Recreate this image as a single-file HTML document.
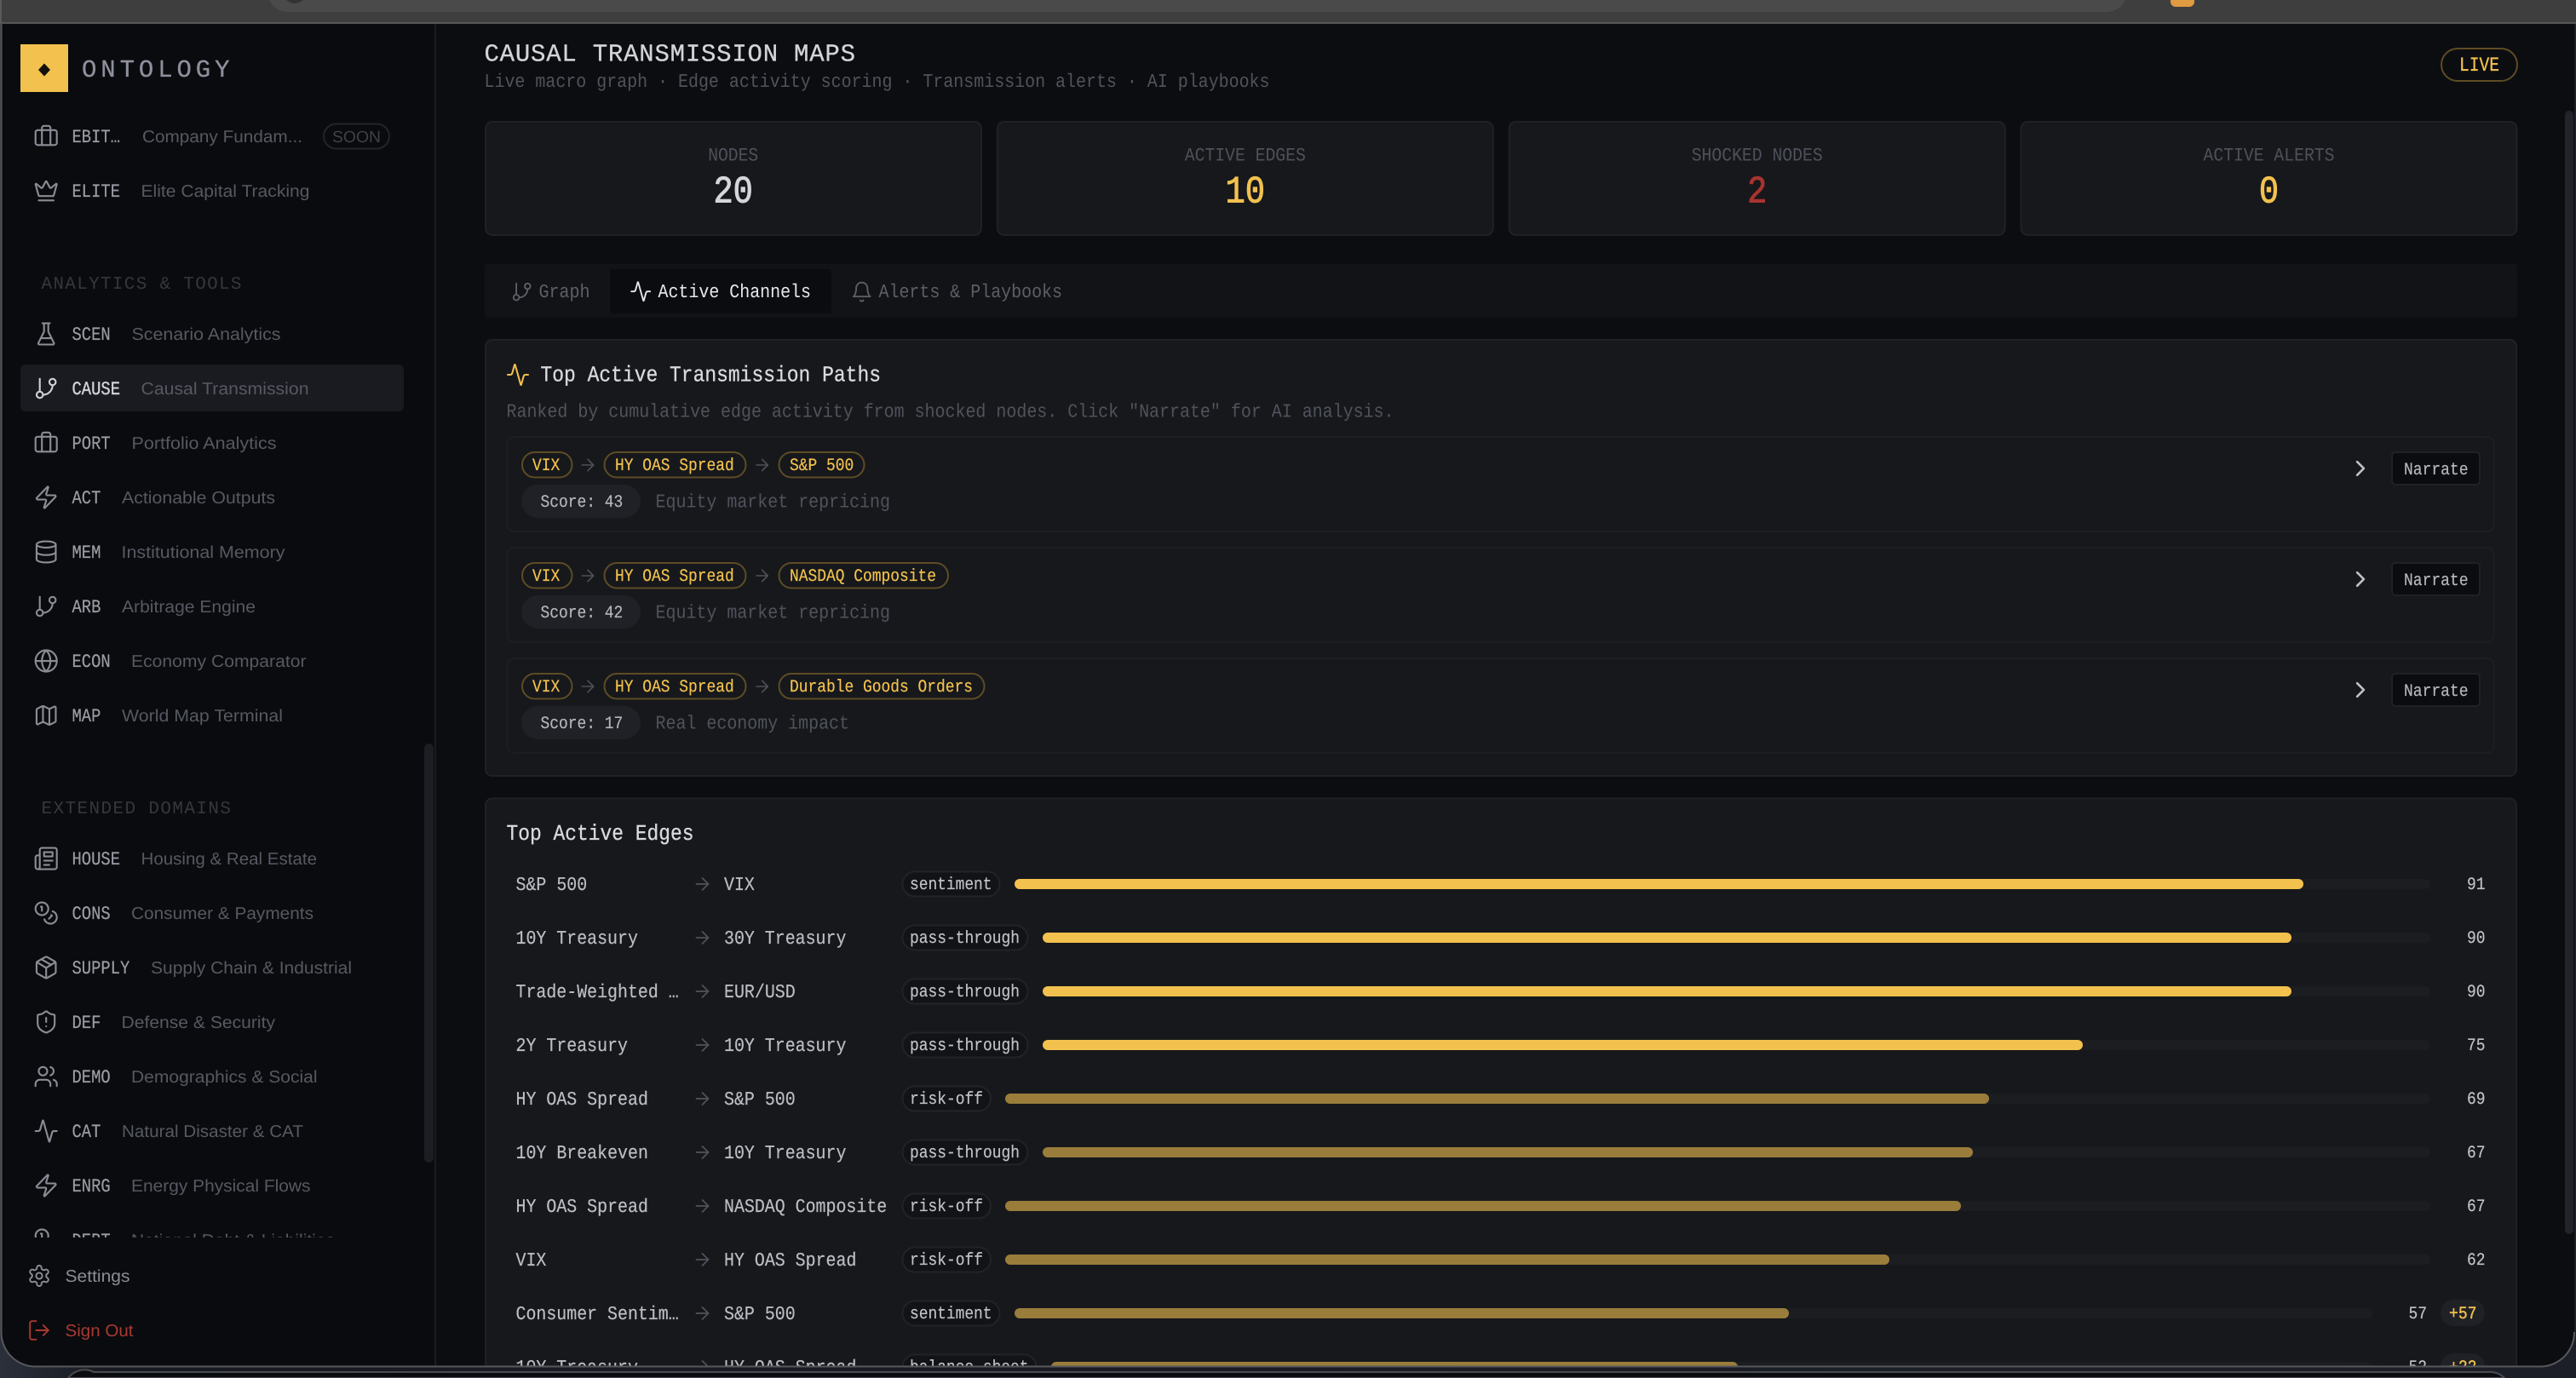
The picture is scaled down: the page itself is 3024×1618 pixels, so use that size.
<!DOCTYPE html>
<html><head><meta charset="utf-8"><title>Causal Transmission Maps</title>
<style>
html,body{margin:0;padding:0;width:3024px;height:1618px;overflow:hidden;background:#16181d}
svg{display:block}
text{white-space:pre;text-rendering:geometricPrecision}
.m{font-family:"Liberation Mono",monospace}
.s{font-family:"Liberation Sans",sans-serif}
.ic{fill:none;stroke-linecap:round;stroke-linejoin:round}
.code{font-size:22px;fill:#9a9da5;stroke:#9a9da5;stroke-width:.2}
.sub{font-size:20px;fill:#565962}
.sb{font-size:22.5px;fill:#50535b}
.lbl{font-size:22px;fill:#4e5159;text-anchor:middle}
.val{font-size:45px;font-weight:400;text-anchor:middle;stroke-width:1}
.chip{fill:none;stroke:#5e4c24;stroke-width:2}
.ct{font-size:20.5px;fill:#f2c14e;stroke:#f2c14e;stroke-width:.2}
.sc{font-size:20.5px;fill:#b4b6bc;stroke:#b4b6bc;stroke-width:.2}
.nar{font-size:20.5px;fill:#b4b6bc;stroke:#b4b6bc;stroke-width:.2}
.e{font-size:22.5px;fill:#bcbec4;stroke:#bcbec4;stroke-width:.2}
.t{font-size:20.5px;fill:#c0c2c7;stroke:#c0c2c7;stroke-width:.2}
.n{font-size:20.5px;fill:#c0c2c7;stroke:#c0c2c7;stroke-width:.2}
.tag{fill:#121317;stroke:#212329;stroke-width:2}
.tr{fill:#1b1d21}
.hi{fill:#f2c14e}
.lo{fill:#9a7d3b}
</style></head>
<body>
<svg xmlns="http://www.w3.org/2000/svg" width="3024" height="1618" viewBox="0 0 3024 1618">
<defs>
<linearGradient id="out" x1="0" x2="1" y1="0" y2="0"><stop offset="0" stop-color="#2b303b"/><stop offset=".04" stop-color="#171a20"/><stop offset="1" stop-color="#1c1f27"/></linearGradient>
<clipPath id="win"><path d="M2 28H3022V1564a40 40 0 0 1-40 40H42a40 40 0 0 1-40-40Z"/></clipPath>
<clipPath id="nav"><rect x="2" y="120" width="496" height="1333"/></clipPath>
<g id="i-brief"><path d="M16 21V5a2 2 0 0 0-2-2h-4a2 2 0 0 0-2 2v16"/><rect x="2" y="7" width="20" height="14" rx="2"/></g>
<g id="i-crown"><path d="M11.562 3.266a.5.5 0 0 1 .876 0L15.39 8.87a1 1 0 0 0 1.516.294L21.183 5.5a.5.5 0 0 1 .798.519l-2.834 10.246a1 1 0 0 1-.956.734H5.81a1 1 0 0 1-.957-.734L2.02 6.02a.5.5 0 0 1 .798-.519l4.276 3.664a1 1 0 0 0 1.516-.294z"/><path d="M5 21h14"/></g>
<g id="i-flask"><path d="M10 2v7.527a2 2 0 0 1-.211.896L4.72 20.55a1 1 0 0 0 .9 1.45h12.76a1 1 0 0 0 .9-1.45l-5.069-10.127A2 2 0 0 1 14 9.527V2"/><path d="M8.5 2h7"/><path d="M7 16h10"/></g>
<g id="i-branch"><path d="M6 3v12"/><circle cx="18" cy="6" r="3"/><circle cx="6" cy="18" r="3"/><path d="M18 9a9 9 0 0 1-9 9"/></g>
<g id="i-zap"><path d="M4 14a1 1 0 0 1-.78-1.63l9.9-10.2a.5.5 0 0 1 .86.46l-1.92 6.02A1 1 0 0 0 13 10h7a1 1 0 0 1 .78 1.63l-9.9 10.2a.5.5 0 0 1-.86-.46l1.92-6.02A1 1 0 0 0 11 14z"/></g>
<g id="i-db"><ellipse cx="12" cy="5" rx="9" ry="3"/><path d="M3 5V19A9 3 0 0 0 21 19V5"/><path d="M3 12A9 3 0 0 0 21 12"/></g>
<g id="i-globe"><circle cx="12" cy="12" r="10"/><path d="M12 2a14.5 14.5 0 0 0 0 20 14.5 14.5 0 0 0 0-20"/><path d="M2 12h20"/></g>
<g id="i-map"><path d="M14.106 5.553a2 2 0 0 0 1.788 0l3.659-1.83A1 1 0 0 1 21 4.619v12.764a1 1 0 0 1-.553.894l-4.553 2.277a2 2 0 0 1-1.788 0l-4.212-2.106a2 2 0 0 0-1.788 0l-3.659 1.83A1 1 0 0 1 3 19.381V6.618a1 1 0 0 1 .553-.894l4.553-2.277a2 2 0 0 1 1.788 0z"/><path d="M15 5.764v15"/><path d="M9 3.236v15"/></g>
<g id="i-news"><path d="M4 22h16a2 2 0 0 0 2-2V4a2 2 0 0 0-2-2H8a2 2 0 0 0-2 2v16a2 2 0 0 1-2 2Zm0 0a2 2 0 0 1-2-2v-9c0-1.1.9-2 2-2h2"/><path d="M18 14h-8"/><path d="M15 18h-5"/><path d="M10 6h8v4h-8V6Z"/></g>
<g id="i-coins"><circle cx="8" cy="8" r="6"/><path d="M18.09 10.37A6 6 0 1 1 10.34 18"/><path d="M7 6h1v4"/><path d="m16.71 13.88.7.71-2.82 2.82"/></g>
<g id="i-pkg"><path d="M11 21.73a2 2 0 0 0 2 0l7-4A2 2 0 0 0 21 16V8a2 2 0 0 0-1-1.73l-7-4a2 2 0 0 0-2 0l-7 4A2 2 0 0 0 3 8v8a2 2 0 0 0 1 1.73z"/><path d="M12 22V12"/><path d="m3.3 7 7.703 4.734a2 2 0 0 0 1.994 0L20.7 7"/><path d="m7.5 4.27 9 5.15"/></g>
<g id="i-shield"><path d="M20 13c0 5-3.5 7.5-7.66 8.95a1 1 0 0 1-.67-.01C7.5 20.5 4 18 4 13V6a1 1 0 0 1 1-1c2 0 4.5-1.2 6.24-2.72a1.17 1.17 0 0 1 1.52 0C14.51 3.81 17 5 19 5a1 1 0 0 1 1 1z"/><path d="M12 8v4"/><path d="M12 16h.01"/></g>
<g id="i-users"><path d="M16 21v-2a4 4 0 0 0-4-4H6a4 4 0 0 0-4 4v2"/><circle cx="9" cy="7" r="4"/><path d="M22 21v-2a4 4 0 0 0-3-3.87"/><path d="M16 3.13a4 4 0 0 1 0 7.75"/></g>
<g id="i-act"><path d="M22 12h-2.48a2 2 0 0 0-1.93 1.46l-2.35 8.36a.25.25 0 0 1-.48 0L9.24 2.18a.25.25 0 0 0-.48 0l-2.35 8.36A2 2 0 0 1 4.49 12H2"/></g>
<g id="i-gear"><path d="M12.22 2h-.44a2 2 0 0 0-2 2v.18a2 2 0 0 1-1 1.73l-.43.25a2 2 0 0 1-2 0l-.15-.08a2 2 0 0 0-2.73.73l-.22.38a2 2 0 0 0 .73 2.73l.15.1a2 2 0 0 1 1 1.72v.51a2 2 0 0 1-1 1.74l-.15.09a2 2 0 0 0-.73 2.73l.22.38a2 2 0 0 0 2.73.73l.15-.08a2 2 0 0 1 2 0l.43.25a2 2 0 0 1 1 1.73V20a2 2 0 0 0 2 2h.44a2 2 0 0 0 2-2v-.18a2 2 0 0 1 1-1.73l.43-.25a2 2 0 0 1 2 0l.15.08a2 2 0 0 0 2.73-.73l.22-.39a2 2 0 0 0-.73-2.73l-.15-.08a2 2 0 0 1-1-1.74v-.5a2 2 0 0 1 1-1.74l.15-.09a2 2 0 0 0 .73-2.73l-.22-.38a2 2 0 0 0-2.73-.73l-.15.08a2 2 0 0 1-2 0l-.43-.25a2 2 0 0 1-1-1.73V4a2 2 0 0 0-2-2z"/><circle cx="12" cy="12" r="3"/></g>
<g id="i-out"><path d="M9 21H5a2 2 0 0 1-2-2V5a2 2 0 0 1 2-2h4"/><path d="M16 17l5-5-5-5"/><path d="M21 12H9"/></g>
<g id="i-bell"><path d="M6 8a6 6 0 0 1 12 0c0 7 3 9 3 9H3s3-2 3-9"/><path d="M10.3 21a1.94 1.94 0 0 0 3.4 0"/></g>
<g id="i-arrow"><path d="M5 12h14"/><path d="m12 5 7 7-7 7"/></g>
<g id="i-chev"><path d="m9 18 6-6-6-6"/></g>
</defs>

<rect width="3024" height="1618" fill="url(#out)"/>
<path d="M80 1618a24 24 0 0 1 30-7H2920a24 24 0 0 1 20 7Z" fill="#0b0c0f" stroke="#4a4c50" stroke-width="2"/>
<rect x="0" y="0" width="3024" height="28" fill="#3e3e3e"/>
<rect x="0" y="0" width="2" height="28" fill="#5a5a5a"/>
<path d="M314 -10H2497a24 24 0 0 1-24 24H338a24 24 0 0 1-24-24Z" fill="#4a4a4a"/>
<circle cx="346" cy="-10" r="14" fill="#333"/>
<rect x="2548" y="-8" width="28" height="16" rx="6" fill="#e09a42"/>
<rect x="0" y="26" width="3024" height="2" fill="#575757"/>

<g clip-path="url(#win)">
<rect x="2" y="28" width="3020" height="1580" fill="#0c0d11"/>
<rect x="2" y="28" width="508" height="1580" fill="#0a0b0e"/>
<rect x="510" y="28" width="2" height="1580" fill="#1a1c20"/>

<rect x="24" y="52" width="56" height="56" fill="#f2c14e"/>
<path d="M52 74.500l7 7.500-7 7.500-7-7.500z" fill="#12100a"/>
<text class="m" x="96" y="90" font-size="29" fill="#8d909c" stroke="#8d909c" stroke-width=".3" textLength="173.500" lengthAdjust="spacing">ONTOLOGY</text>

<g clip-path="url(#nav)">
<rect x="24" y="428" width="450" height="55" rx="6" fill="#1a1b21"/>
<g class="ic" stroke="#8a8d95" stroke-width="1.7">
<use href="#i-brief" transform="translate(39.200 144) scale(1.25)"/>
<use href="#i-crown" transform="translate(39.200 209) scale(1.25)"/>
<use href="#i-flask" transform="translate(39.200 377) scale(1.25)"/>
<use href="#i-branch" transform="translate(39.200 441) scale(1.25)" stroke="#cfd1d5"/>
<use href="#i-brief" transform="translate(39.200 504) scale(1.25)"/>
<use href="#i-zap" transform="translate(39.200 569) scale(1.25)"/>
<use href="#i-db" transform="translate(39.200 633) scale(1.25)"/>
<use href="#i-branch" transform="translate(39.200 697) scale(1.25)"/>
<use href="#i-globe" transform="translate(39.200 761) scale(1.25)"/>
<use href="#i-map" transform="translate(39.200 825) scale(1.25)"/>
<use href="#i-news" transform="translate(39.200 993) scale(1.25)"/>
<use href="#i-coins" transform="translate(39.200 1057) scale(1.25)"/>
<use href="#i-pkg" transform="translate(39.200 1121) scale(1.25)"/>
<use href="#i-shield" transform="translate(39.200 1185) scale(1.25)"/>
<use href="#i-users" transform="translate(39.200 1249) scale(1.25)"/>
<use href="#i-act" transform="translate(39.200 1313) scale(1.25)"/>
<use href="#i-zap" transform="translate(39.200 1377) scale(1.25)"/>
<use href="#i-coins" transform="translate(39.200 1441) scale(1.25)"/>
</g>
<g class="m code">
<text x="84.500" y="167" textLength="56.500" lengthAdjust="spacingAndGlyphs">EBIT…</text>
<text x="84.500" y="231" textLength="56.500" lengthAdjust="spacingAndGlyphs">ELITE</text>
<text x="84.500" y="399" textLength="45.200" lengthAdjust="spacingAndGlyphs">SCEN</text>
<text x="84.500" y="463" textLength="56.500" lengthAdjust="spacingAndGlyphs" style="fill:#d0d2d6;stroke:#d0d2d6;stroke-width:.4">CAUSE</text>
<text x="84.500" y="527" textLength="45.200" lengthAdjust="spacingAndGlyphs">PORT</text>
<text x="84.500" y="591" textLength="33.900" lengthAdjust="spacingAndGlyphs">ACT</text>
<text x="84.500" y="655" textLength="33.900" lengthAdjust="spacingAndGlyphs">MEM</text>
<text x="84.500" y="719" textLength="33.900" lengthAdjust="spacingAndGlyphs">ARB</text>
<text x="84.500" y="783" textLength="45.200" lengthAdjust="spacingAndGlyphs">ECON</text>
<text x="84.500" y="847" textLength="33.900" lengthAdjust="spacingAndGlyphs">MAP</text>
<text x="84.500" y="1015" textLength="56.500" lengthAdjust="spacingAndGlyphs">HOUSE</text>
<text x="84.500" y="1079" textLength="45.200" lengthAdjust="spacingAndGlyphs">CONS</text>
<text x="84.500" y="1143" textLength="67.800" lengthAdjust="spacingAndGlyphs">SUPPLY</text>
<text x="84.500" y="1207" textLength="33.900" lengthAdjust="spacingAndGlyphs">DEF</text>
<text x="84.500" y="1271" textLength="45.200" lengthAdjust="spacingAndGlyphs">DEMO</text>
<text x="84.500" y="1335" textLength="33.900" lengthAdjust="spacingAndGlyphs">CAT</text>
<text x="84.500" y="1399" textLength="45.200" lengthAdjust="spacingAndGlyphs">ENRG</text>
<text x="84.500" y="1463" textLength="45.200" lengthAdjust="spacingAndGlyphs">DEBT</text>
</g>
<g class="s sub">
<text x="167" y="167" textLength="188" lengthAdjust="spacingAndGlyphs">Company Fundam...</text>
<text x="165.500" y="231" textLength="198" lengthAdjust="spacingAndGlyphs">Elite Capital Tracking</text>
<text x="154.500" y="399" textLength="175" lengthAdjust="spacingAndGlyphs">Scenario Analytics</text>
<text x="165.500" y="463" textLength="197" lengthAdjust="spacingAndGlyphs">Causal Transmission</text>
<text x="154.500" y="527" textLength="170" lengthAdjust="spacingAndGlyphs">Portfolio Analytics</text>
<text x="143" y="591" textLength="180" lengthAdjust="spacingAndGlyphs">Actionable Outputs</text>
<text x="142.500" y="655" textLength="192" lengthAdjust="spacingAndGlyphs">Institutional Memory</text>
<text x="143" y="719" textLength="157" lengthAdjust="spacingAndGlyphs">Arbitrage Engine</text>
<text x="154" y="783" textLength="205.500" lengthAdjust="spacingAndGlyphs">Economy Comparator</text>
<text x="143" y="847" textLength="189" lengthAdjust="spacingAndGlyphs">World Map Terminal</text>
<text x="165.500" y="1015" textLength="206.500" lengthAdjust="spacingAndGlyphs">Housing &amp; Real Estate</text>
<text x="154" y="1079" textLength="214" lengthAdjust="spacingAndGlyphs">Consumer &amp; Payments</text>
<text x="177" y="1143" textLength="236" lengthAdjust="spacingAndGlyphs">Supply Chain &amp; Industrial</text>
<text x="142.500" y="1207" textLength="180.500" lengthAdjust="spacingAndGlyphs">Defense &amp; Security</text>
<text x="154" y="1271" textLength="218.500" lengthAdjust="spacingAndGlyphs">Demographics &amp; Social</text>
<text x="143" y="1335" textLength="213" lengthAdjust="spacingAndGlyphs">Natural Disaster &amp; CAT</text>
<text x="154" y="1399" textLength="210.500" lengthAdjust="spacingAndGlyphs">Energy Physical Flows</text>
<text x="154" y="1463" textLength="239" lengthAdjust="spacingAndGlyphs">National Debt &amp; Liabilities</text>
</g>
<rect x="380" y="145.500" width="77" height="29" rx="14.500" fill="none" stroke="#22242a" stroke-width="2"/>
<text class="s" x="390" y="167" font-size="19" fill="#3f4148" textLength="57" lengthAdjust="spacingAndGlyphs">SOON</text>
<text class="m" x="48.500" y="339" font-size="21" fill="#35373d" textLength="235" lengthAdjust="spacing">ANALYTICS &amp; TOOLS</text>
<text class="m" x="48.500" y="955" font-size="21" fill="#35373d" textLength="222.500" lengthAdjust="spacing">EXTENDED DOMAINS</text>
</g>
<rect x="498" y="873" width="11" height="492" rx="5.500" fill="#1c1e23"/>

<g class="ic" stroke-width="1.6">
<use href="#i-gear" transform="translate(31.600 1483.600) scale(1.2)" stroke="#8a8d95"/>
<use href="#i-out" transform="translate(31.600 1547.600) scale(1.2)" stroke="#a83a32"/>
</g>
<text class="s" x="76.500" y="1505" font-size="20" fill="#8a8d95" textLength="76" lengthAdjust="spacingAndGlyphs">Settings</text>
<text class="s" x="76.500" y="1569" font-size="20" fill="#a83a32" textLength="80" lengthAdjust="spacingAndGlyphs">Sign Out</text>

<text class="m" x="568.500" y="71.500" font-size="29" fill="#d2d4d9" stroke="#d2d4d9" stroke-width=".3" textLength="435.500" lengthAdjust="spacing">CAUSAL TRANSMISSION MAPS</text>
<text class="m sb" x="568.500" y="102" textLength="922" lengthAdjust="spacingAndGlyphs">Live macro graph · Edge activity scoring · Transmission alerts · AI playbooks</text>
<rect x="2866" y="57" width="89" height="38" rx="19" fill="none" stroke="#5e4c24" stroke-width="2"/>
<text class="m" x="2887" y="83" font-size="23.500" fill="#f2c14e" stroke="#f2c14e" stroke-width=".3" textLength="47" lengthAdjust="spacingAndGlyphs">LIVE</text>

<g fill="#16181c" stroke="#1f2126" stroke-width="2">
<rect x="570" y="143" width="582" height="133" rx="8"/>
<rect x="1170.800" y="143" width="582" height="133" rx="8"/>
<rect x="1771.700" y="143" width="582" height="133" rx="8"/>
<rect x="2372.500" y="143" width="582" height="133" rx="8"/>
</g>
<g class="m">
<text class="lbl" x="860.700" y="188.500" textLength="59" lengthAdjust="spacingAndGlyphs">NODES</text>
<text class="val" x="860.700" y="237.500" fill="#d4d6db" stroke="#d4d6db" textLength="46.500" lengthAdjust="spacingAndGlyphs">20</text>
<text class="lbl" x="1461.800" y="188.500" textLength="142" lengthAdjust="spacingAndGlyphs">ACTIVE EDGES</text>
<text class="val" x="1461.800" y="237.500" fill="#f2c14e" stroke="#f2c14e" textLength="46.500" lengthAdjust="spacingAndGlyphs">10</text>
<text class="lbl" x="2062.700" y="188.500" textLength="154" lengthAdjust="spacingAndGlyphs">SHOCKED NODES</text>
<text class="val" x="2062.700" y="237.500" fill="#a8332e" stroke="#a8332e" textLength="23.200" lengthAdjust="spacingAndGlyphs">2</text>
<text class="lbl" x="2663.500" y="188.500" textLength="154" lengthAdjust="spacingAndGlyphs">ACTIVE ALERTS</text>
<text class="val" x="2663.500" y="237.500" fill="#f2c14e" stroke="#f2c14e" textLength="23.200" lengthAdjust="spacingAndGlyphs">0</text>
</g>

<rect x="569" y="310" width="2386" height="63" rx="4" fill="#121317"/>
<rect x="716" y="316" width="260" height="52" rx="3" fill="#0b0c0f"/>
<g class="ic" stroke-width="1.7">
<use href="#i-branch" transform="translate(599.500 329.500) scale(1.1)" stroke="#5c5f67"/>
<use href="#i-act" transform="translate(739 329) scale(1.1)" stroke="#e8e9eb"/>
<use href="#i-bell" transform="translate(998.500 329.500) scale(1.1)" stroke="#5c5f67"/>
</g>
<g class="m" font-size="22.500">
<text x="632.500" y="349" fill="#5c5f67" textLength="60" lengthAdjust="spacingAndGlyphs">Graph</text>
<text x="772.500" y="349" fill="#e8e9eb" textLength="179.500" lengthAdjust="spacingAndGlyphs">Active Channels</text>
<text x="1031.500" y="349" fill="#5c5f67" textLength="215.500" lengthAdjust="spacingAndGlyphs">Alerts &amp; Playbooks</text>
</g>

<rect x="570" y="399" width="2384" height="512" rx="8" fill="#16181c" stroke="#1f2126" stroke-width="2"/>
<use href="#i-act" class="ic" transform="translate(593.600 425.600) scale(1.2)" stroke="#f2c14e" stroke-width="1.7"/>
<text class="m" x="634.500" y="447.500" font-size="26" fill="#d8dade" stroke="#d8dade" stroke-width=".3" textLength="399.500" lengthAdjust="spacingAndGlyphs">Top Active Transmission Paths</text>
<text class="m sb" x="594.500" y="489.500" textLength="1042" lengthAdjust="spacingAndGlyphs">Ranked by cumulative edge activity from shocked nodes. Click "Narrate" for AI analysis.</text>

<g fill="none" stroke="#1c1e23" stroke-width="2">
<rect x="595.500" y="513" width="2332" height="111" rx="8"/>
<rect x="595.500" y="643" width="2332" height="111" rx="8"/>
<rect x="595.500" y="773" width="2332" height="111" rx="8"/>
</g>

<g class="chip">
<rect x="613" y="531" width="58.500" height="29.500" rx="14.700"/><rect x="709.500" y="531" width="166" height="29.500" rx="14.700"/><rect x="914.500" y="531" width="100" height="29.500" rx="14.700"/>
<rect x="613" y="661" width="58.500" height="29.500" rx="14.700"/><rect x="709.500" y="661" width="166" height="29.500" rx="14.700"/><rect x="914.500" y="661" width="198.500" height="29.500" rx="14.700"/>
<rect x="613" y="791" width="58.500" height="29.500" rx="14.700"/><rect x="709.500" y="791" width="166" height="29.500" rx="14.700"/><rect x="914.500" y="791" width="241" height="29.500" rx="14.700"/>
</g>
<g class="ic" stroke="#4e5159" stroke-width="1.7">
<use href="#i-arrow" transform="translate(678.600 534.600) scale(.95)"/><use href="#i-arrow" transform="translate(883.200 534.600) scale(.95)"/>
<use href="#i-arrow" transform="translate(678.600 664.600) scale(.95)"/><use href="#i-arrow" transform="translate(883.200 664.600) scale(.95)"/>
<use href="#i-arrow" transform="translate(678.600 794.600) scale(.95)"/><use href="#i-arrow" transform="translate(883.200 794.600) scale(.95)"/>
</g>
<g class="m ct">
<text x="625" y="552" textLength="32.300" lengthAdjust="spacingAndGlyphs">VIX</text>
<text x="722" y="552" textLength="139.800" lengthAdjust="spacingAndGlyphs">HY OAS Spread</text>
<text x="927" y="552" textLength="75.300" lengthAdjust="spacingAndGlyphs">S&amp;P 500</text>
<text x="625" y="682" textLength="32.300" lengthAdjust="spacingAndGlyphs">VIX</text>
<text x="722" y="682" textLength="139.800" lengthAdjust="spacingAndGlyphs">HY OAS Spread</text>
<text x="927" y="682" textLength="172" lengthAdjust="spacingAndGlyphs">NASDAQ Composite</text>
<text x="625" y="812" textLength="32.300" lengthAdjust="spacingAndGlyphs">VIX</text>
<text x="722" y="812" textLength="139.800" lengthAdjust="spacingAndGlyphs">HY OAS Spread</text>
<text x="927" y="812" textLength="215" lengthAdjust="spacingAndGlyphs">Durable Goods Orders</text>
</g>
<g fill="#1f2126">
<rect x="612" y="569" width="140" height="39" rx="19.500"/><rect x="612" y="699" width="140" height="39" rx="19.500"/><rect x="612" y="829" width="140" height="39" rx="19.500"/>
</g>
<g class="m sc">
<text x="634.500" y="595" textLength="96.800" lengthAdjust="spacingAndGlyphs">Score: 43</text>
<text x="634.500" y="725" textLength="96.800" lengthAdjust="spacingAndGlyphs">Score: 42</text>
<text x="634.500" y="855" textLength="96.800" lengthAdjust="spacingAndGlyphs">Score: 17</text>
</g>
<g class="m sb">
<text x="769.500" y="595.500" textLength="275.500" lengthAdjust="spacingAndGlyphs">Equity market repricing</text>
<text x="769.500" y="725.500" textLength="275.500" lengthAdjust="spacingAndGlyphs">Equity market repricing</text>
<text x="769.500" y="855.500" textLength="227.500" lengthAdjust="spacingAndGlyphs">Real economy impact</text>
</g>

<g class="ic" stroke="#c0c2c7" stroke-width="2">
<use href="#i-chev" transform="translate(2755.400 534.400) scale(1.3)"/>
<use href="#i-chev" transform="translate(2755.400 664.400) scale(1.3)"/>
<use href="#i-chev" transform="translate(2755.400 794.400) scale(1.3)"/>
</g>
<g fill="#0b0c0f" stroke="#1f2126" stroke-width="2">
<rect x="2808" y="531" width="103" height="38" rx="4"/><rect x="2808" y="661" width="103" height="38" rx="4"/><rect x="2808" y="791" width="103" height="38" rx="4"/>
</g>
<g class="m nar">
<text x="2822" y="557" textLength="75.500" lengthAdjust="spacingAndGlyphs">Narrate</text>
<text x="2822" y="687" textLength="75.500" lengthAdjust="spacingAndGlyphs">Narrate</text>
<text x="2822" y="817" textLength="75.500" lengthAdjust="spacingAndGlyphs">Narrate</text>
</g>

<rect x="570" y="937.500" width="2384" height="720" rx="8" fill="#16181c" stroke="#1f2126" stroke-width="2"/>
<text class="m" x="594.500" y="986" font-size="26" fill="#d8dade" stroke="#d8dade" stroke-width=".3" textLength="220" lengthAdjust="spacingAndGlyphs">Top Active Edges</text>

<g class="m e">
<text x="605.500" y="1045" textLength="83.700" lengthAdjust="spacingAndGlyphs">S&amp;P 500</text><text x="850" y="1045" textLength="35.900" lengthAdjust="spacingAndGlyphs">VIX</text>
<text x="605.500" y="1108" textLength="143.400" lengthAdjust="spacingAndGlyphs">10Y Treasury</text><text x="850" y="1108" textLength="143.400" lengthAdjust="spacingAndGlyphs">30Y Treasury</text>
<text x="605.500" y="1171" textLength="191.200" lengthAdjust="spacingAndGlyphs">Trade-Weighted …</text><text x="850" y="1171" textLength="83.700" lengthAdjust="spacingAndGlyphs">EUR/USD</text>
<text x="605.500" y="1234" textLength="131.500" lengthAdjust="spacingAndGlyphs">2Y Treasury</text><text x="850" y="1234" textLength="143.400" lengthAdjust="spacingAndGlyphs">10Y Treasury</text>
<text x="605.500" y="1297" textLength="155.400" lengthAdjust="spacingAndGlyphs">HY OAS Spread</text><text x="850" y="1297" textLength="83.700" lengthAdjust="spacingAndGlyphs">S&amp;P 500</text>
<text x="605.500" y="1360" textLength="155.400" lengthAdjust="spacingAndGlyphs">10Y Breakeven</text><text x="850" y="1360" textLength="143.400" lengthAdjust="spacingAndGlyphs">10Y Treasury</text>
<text x="605.500" y="1423" textLength="155.400" lengthAdjust="spacingAndGlyphs">HY OAS Spread</text><text x="850" y="1423" textLength="191.200" lengthAdjust="spacingAndGlyphs">NASDAQ Composite</text>
<text x="605.500" y="1486" textLength="35.900" lengthAdjust="spacingAndGlyphs">VIX</text><text x="850" y="1486" textLength="155.400" lengthAdjust="spacingAndGlyphs">HY OAS Spread</text>
<text x="605.500" y="1549" textLength="191.200" lengthAdjust="spacingAndGlyphs">Consumer Sentim…</text><text x="850" y="1549" textLength="83.700" lengthAdjust="spacingAndGlyphs">S&amp;P 500</text>
<text x="605.500" y="1612" textLength="143.400" lengthAdjust="spacingAndGlyphs">10Y Treasury</text><text x="850" y="1612" textLength="155.400" lengthAdjust="spacingAndGlyphs">HY OAS Spread</text>
</g>
<g class="ic" stroke="#50535b" stroke-width="1.7">
<use href="#i-arrow" transform="translate(812.500 1026)"/><use href="#i-arrow" transform="translate(812.500 1089)"/><use href="#i-arrow" transform="translate(812.500 1152)"/><use href="#i-arrow" transform="translate(812.500 1215)"/><use href="#i-arrow" transform="translate(812.500 1278)"/><use href="#i-arrow" transform="translate(812.500 1341)"/><use href="#i-arrow" transform="translate(812.500 1404)"/><use href="#i-arrow" transform="translate(812.500 1467)"/><use href="#i-arrow" transform="translate(812.500 1530)"/><use href="#i-arrow" transform="translate(812.500 1593)"/>
</g>
<rect class="tag" x="1059.500" y="1023.500" width="114" height="29" rx="14.500"/>
<rect class="tag" x="1059.500" y="1086.500" width="147" height="29" rx="14.500"/>
<rect class="tag" x="1059.500" y="1149.500" width="147" height="29" rx="14.500"/>
<rect class="tag" x="1059.500" y="1212.500" width="147" height="29" rx="14.500"/>
<rect class="tag" x="1059.500" y="1275.500" width="103.500" height="29" rx="14.500"/>
<rect class="tag" x="1059.500" y="1338.500" width="147" height="29" rx="14.500"/>
<rect class="tag" x="1059.500" y="1401.500" width="103.500" height="29" rx="14.500"/>
<rect class="tag" x="1059.500" y="1464.500" width="103.500" height="29" rx="14.500"/>
<rect class="tag" x="1059.500" y="1527.500" width="114" height="29" rx="14.500"/>
<rect class="tag" x="1059.500" y="1590.500" width="157" height="29" rx="14.500"/>
<g class="m t">
<text x="1068" y="1044" textLength="96.500" lengthAdjust="spacingAndGlyphs">sentiment</text>
<text x="1068" y="1107" textLength="129" lengthAdjust="spacingAndGlyphs">pass-through</text>
<text x="1068" y="1170" textLength="129" lengthAdjust="spacingAndGlyphs">pass-through</text>
<text x="1068" y="1233" textLength="129" lengthAdjust="spacingAndGlyphs">pass-through</text>
<text x="1068" y="1296" textLength="86" lengthAdjust="spacingAndGlyphs">risk-off</text>
<text x="1068" y="1359" textLength="129" lengthAdjust="spacingAndGlyphs">pass-through</text>
<text x="1068" y="1422" textLength="86" lengthAdjust="spacingAndGlyphs">risk-off</text>
<text x="1068" y="1485" textLength="86" lengthAdjust="spacingAndGlyphs">risk-off</text>
<text x="1068" y="1548" textLength="96.500" lengthAdjust="spacingAndGlyphs">sentiment</text>
<text x="1068" y="1611" textLength="139.500" lengthAdjust="spacingAndGlyphs">balance-sheet</text>
</g>
<g class="tr">
<rect x="1191" y="1032" width="1662" height="12" rx="6"/>
<rect x="1224" y="1095" width="1629" height="12" rx="6"/>
<rect x="1224" y="1158" width="1629" height="12" rx="6"/>
<rect x="1224" y="1221" width="1629" height="12" rx="6"/>
<rect x="1180" y="1284" width="1673" height="12" rx="6"/>
<rect x="1224" y="1347" width="1629" height="12" rx="6"/>
<rect x="1180" y="1410" width="1673" height="12" rx="6"/>
<rect x="1180" y="1473" width="1673" height="12" rx="6"/>
<rect x="1191" y="1536" width="1594" height="12" rx="6"/>
<rect x="1234" y="1599" width="1551" height="12" rx="6"/>
</g>
<rect class="hi" x="1191" y="1032" width="1513" height="12" rx="6"/>
<rect class="hi" x="1224" y="1095" width="1466" height="12" rx="6"/>
<rect class="hi" x="1224" y="1158" width="1466" height="12" rx="6"/>
<rect class="hi" x="1224" y="1221" width="1221" height="12" rx="6"/>
<rect class="lo" x="1180" y="1284" width="1155" height="12" rx="6"/>
<rect class="lo" x="1224" y="1347" width="1092" height="12" rx="6"/>
<rect class="lo" x="1180" y="1410" width="1122" height="12" rx="6"/>
<rect class="lo" x="1180" y="1473" width="1038" height="12" rx="6"/>
<rect class="lo" x="1191" y="1536" width="909" height="12" rx="6"/>
<rect class="lo" x="1234" y="1599" width="806" height="12" rx="6"/>
<g class="m n">
<text x="2896" y="1044" textLength="21.500" lengthAdjust="spacingAndGlyphs">91</text><text x="2896" y="1107" textLength="21.500" lengthAdjust="spacingAndGlyphs">90</text><text x="2896" y="1170" textLength="21.500" lengthAdjust="spacingAndGlyphs">90</text><text x="2896" y="1233" textLength="21.500" lengthAdjust="spacingAndGlyphs">75</text><text x="2896" y="1296" textLength="21.500" lengthAdjust="spacingAndGlyphs">69</text><text x="2896" y="1359" textLength="21.500" lengthAdjust="spacingAndGlyphs">67</text><text x="2896" y="1422" textLength="21.500" lengthAdjust="spacingAndGlyphs">67</text><text x="2896" y="1485" textLength="21.500" lengthAdjust="spacingAndGlyphs">62</text><text x="2827.500" y="1548" textLength="21.500" lengthAdjust="spacingAndGlyphs">57</text><text x="2827.500" y="1611" textLength="21.500" lengthAdjust="spacingAndGlyphs">52</text>
</g>
<rect x="2865" y="1526" width="52" height="31" rx="15.500" fill="#1f2126"/>
<rect x="2865" y="1589" width="52" height="31" rx="15.500" fill="#1f2126"/>
<g class="m" font-size="20.500" fill="#f2c14e" stroke="#f2c14e" stroke-width=".4">
<text x="2875" y="1548" textLength="32.500" lengthAdjust="spacingAndGlyphs">+57</text>
<text x="2875" y="1611" textLength="32.500" lengthAdjust="spacingAndGlyphs">+22</text>
</g>
<rect x="3011" y="130" width="10" height="1319" rx="5" fill="#22242a"/>
</g>
<path d="M1.500 28V1564a40 40 0 0 0 40 40.500H2982a40 40 0 0 0 40-40.500" fill="none" stroke="#56585c" stroke-width="2"/>
</svg>
</body></html>
